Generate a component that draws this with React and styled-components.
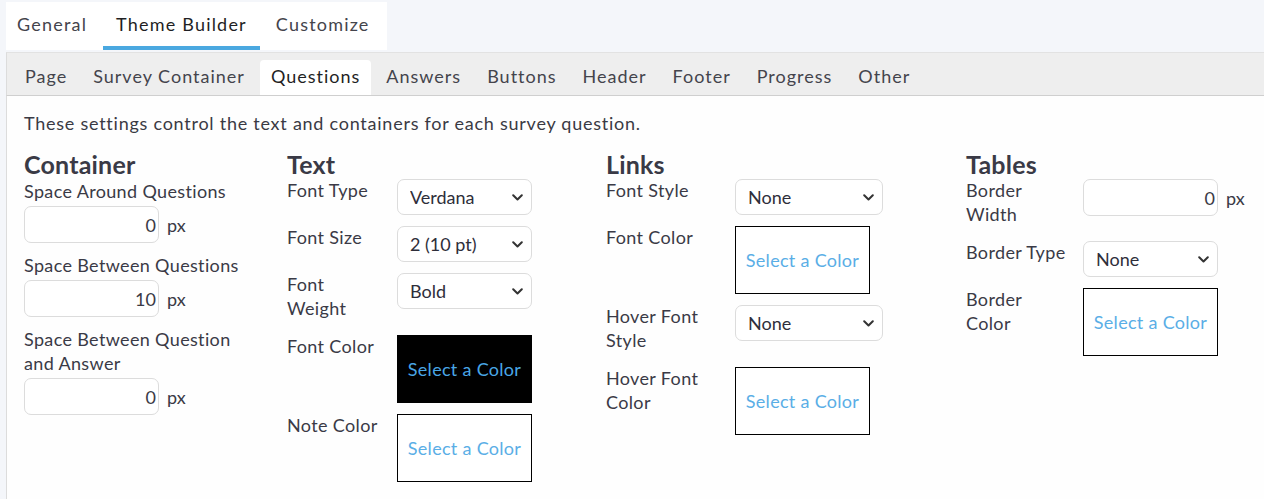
import React from 'react';
import styled, { createGlobalStyle } from 'styled-components';

const GlobalStyle = createGlobalStyle`
  body {
    margin: 0;
    background: #f4f6fa;
    font-family: Lato, "Open Sans", sans-serif;
    color: #333;
  }
`;

const Page = styled.div`
  width: 1264px;
  height: 499px;
  overflow: hidden;
  padding-top: 2px;
  box-sizing: border-box;
`;

const TopBar = styled.div`
  display: flex;
  flex-flow: row nowrap;
  gap: 3px;
  width: fit-content;
  margin-left: 6px;
  padding-right: 4px;
  background: #fff;
`;

const TopTab = styled.div`
  height: 48px;
  box-sizing: border-box;
  padding: 0 13px;
  display: flex;
  align-items: center;
  font-size: 18px;
  letter-spacing: 1.2px;
  color: ${p => (p.$active ? '#1f1f24' : '#44444c')};
  border-bottom: 4px solid ${p => (p.$active ? '#4aa8e0' : 'transparent')};
  &:first-child {
    padding-left: 11px;
  }
`;

const SubBar = styled.div`
  display: flex;
  flex-flow: row nowrap;
  align-items: flex-end;
  margin: 2px 0 0 6px;
  height: 44px;
  box-sizing: border-box;
  padding-left: 5px;
  background: #eeeeee;
  border-top: 1px solid #e2e2e2;
  border-left: 1px solid #dcdcdc;
  border-bottom: 1px solid #cfcfcf;
`;

const SubTab = styled.div`
  height: 35px;
  box-sizing: border-box;
  padding: 0 11px 4px;
  margin: 0 2px;
  display: flex;
  align-items: center;
  font-size: 18px;
  letter-spacing: 1px;
  color: ${p => (p.$active ? '#1f1f24' : '#44444c')};
  background: ${p => (p.$active ? '#fff' : 'transparent')};
  border-radius: 4px 4px 0 0;
`;

const Content = styled.div`
  margin-left: 6px;
  height: 403px;
  box-sizing: border-box;
  background: #fefefe;
  border-left: 1px solid #dcdcdc;
  padding: 15px 17px 0;
`;

const Intro = styled.p`
  margin: 0;
  font-size: 18px;
  letter-spacing: 0.75px;
  line-height: 24px;
  color: #3a3a44;
`;

const Columns = styled.div`
  display: grid;
  grid-template-columns: 263px 319px 360px 1fr;
  margin-top: 16px;
`;

const Column = styled.div`
  display: flex;
  flex-direction: column;
`;

const Heading = styled.h2`
  margin: 0;
  font-size: 25px;
  letter-spacing: 0.2px;
  line-height: 26px;
  font-weight: 700;
  color: #3a3a46;
  margin-bottom: 2px;
`;

const StackLabel = styled.div`
  font-size: 18px;
  letter-spacing: 0.35px;
  line-height: 24px;
  color: #3a3a46;
  margin-bottom: 3px;
`;

const Row = styled.div`
  display: grid;
  grid-template-columns: ${p => p.$label}px auto;
  align-items: start;
  margin-bottom: 11px;
`;

const RowLabel = styled.div`
  font-size: 18px;
  letter-spacing: 0.35px;
  line-height: 24px;
  color: #3a3a46;
  margin-top: -1px;
  padding-bottom: 4px;
`;

const InputLine = styled.div`
  display: flex;
  align-items: center;
  gap: 8px;
  margin-bottom: ${p => p.$mb || 0}px;
  font-size: 18px;
  color: #3a3a46;
`;

const NumberInput = styled.input`
  width: 135px;
  height: 37px;
  box-sizing: border-box;
  border: 1px solid #dcdcdc;
  border-radius: 7px;
  padding: 0 2px 0 8px;
  text-align: right;
  font-family: inherit;
  font-size: 18px;
  color: #3a3a46;
  background: #fff;
  outline: none;
`;

const SelectWrap = styled.div`
  position: relative;
  width: ${p => p.$width}px;
  height: 36px;
`;

const Select = styled.select`
  appearance: none;
  width: 100%;
  height: 100%;
  box-sizing: border-box;
  border: 1px solid #dcdcdc;
  border-radius: 7px;
  padding: 0 30px 0 12px;
  font-family: inherit;
  font-size: 18px;
  color: #2e2e3a;
  background: #fff;
  outline: none;
`;

const Chevron = styled.svg`
  position: absolute;
  right: 9px;
  top: 15px;
  pointer-events: none;
`;

const ColorBox = styled.div`
  width: 135px;
  height: 68px;
  box-sizing: border-box;
  border: 1px solid #000;
  background: ${p => (p.$dark ? '#000' : '#fff')};
  color: ${p => (p.$dark ? '#49a6e6' : '#5aaee6')};
  display: flex;
  align-items: center;
  justify-content: center;
  font-size: 18px;
  letter-spacing: 0.3px;
  white-space: nowrap;
`;

const Dropdown = ({ value, width = 135 }) => (
  <SelectWrap $width={width}>
    <Select defaultValue={value}>
      <option>{value}</option>
    </Select>
    <Chevron width="11" height="7" viewBox="0 0 11 7">
      <polyline points="1.2,1.2 5.5,5.5 9.8,1.2" fill="none" stroke="#333" strokeWidth="2" strokeLinecap="round" strokeLinejoin="round" />
    </Chevron>
  </SelectWrap>
);

const PxInput = ({ value, mb }) => (
  <InputLine $mb={mb}>
    <NumberInput defaultValue={value} />
    <span>px</span>
  </InputLine>
);

const ColorPicker = ({ dark }) => <ColorBox $dark={dark}>Select a Color</ColorBox>;

const subTabs = ['Page', 'Survey Container', 'Questions', 'Answers', 'Buttons', 'Header', 'Footer', 'Progress', 'Other'];

export default function App() {
  return (
    <Page>
      <GlobalStyle />
      <TopBar>
        <TopTab>General</TopTab>
        <TopTab $active>Theme Builder</TopTab>
        <TopTab>Customize</TopTab>
      </TopBar>
      <SubBar>
        {subTabs.map(t => (
          <SubTab key={t} $active={t === 'Questions'}>{t}</SubTab>
        ))}
      </SubBar>
      <Content>
        <Intro>These settings control the text and containers for each survey question.</Intro>
        <Columns>
          <Column>
            <Heading>Container</Heading>
            <StackLabel>Space Around Questions</StackLabel>
            <PxInput value="0" mb={10} />
            <StackLabel>Space Between Questions</StackLabel>
            <PxInput value="10" mb={10} />
            <StackLabel>Space Between Question<br />and Answer</StackLabel>
            <PxInput value="0" />
          </Column>

          <Column>
            <Heading>Text</Heading>
            <Row $label={110}>
              <RowLabel>Font Type</RowLabel>
              <Dropdown value="Verdana" />
            </Row>
            <Row $label={110}>
              <RowLabel>Font Size</RowLabel>
              <Dropdown value="2 (10 pt)" />
            </Row>
            <Row $label={110}>
              <RowLabel>Font<br />Weight</RowLabel>
              <Dropdown value="Bold" />
            </Row>
            <Row $label={110}>
              <RowLabel>Font Color</RowLabel>
              <ColorPicker dark />
            </Row>
            <Row $label={110}>
              <RowLabel>Note Color</RowLabel>
              <ColorPicker />
            </Row>
          </Column>

          <Column>
            <Heading>Links</Heading>
            <Row $label={129}>
              <RowLabel>Font Style</RowLabel>
              <Dropdown value="None" width={148} />
            </Row>
            <Row $label={129}>
              <RowLabel>Font Color</RowLabel>
              <ColorPicker />
            </Row>
            <Row $label={129}>
              <RowLabel>Hover Font<br />Style</RowLabel>
              <Dropdown value="None" width={148} />
            </Row>
            <Row $label={129}>
              <RowLabel>Hover Font<br />Color</RowLabel>
              <ColorPicker />
            </Row>
          </Column>

          <Column>
            <Heading>Tables</Heading>
            <Row $label={117}>
              <RowLabel>Border<br />Width</RowLabel>
              <PxInput value="0" />
            </Row>
            <Row $label={117}>
              <RowLabel>Border Type</RowLabel>
              <Dropdown value="None" />
            </Row>
            <Row $label={117}>
              <RowLabel>Border<br />Color</RowLabel>
              <ColorPicker />
            </Row>
          </Column>
        </Columns>
      </Content>
    </Page>
  );
}
